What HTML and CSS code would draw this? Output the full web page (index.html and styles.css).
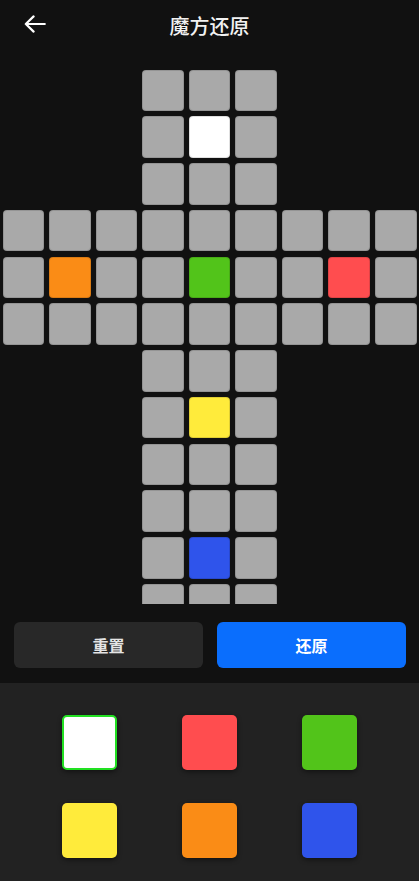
FILE: index.html
```html
<!DOCTYPE html>
<html lang="zh">
<head>
<meta charset="utf-8">
<title>魔方还原</title>
<link rel="stylesheet" href="styles.css">
</head>
<body>
<div class="app">
  <header class="header">
    <div class="back">
      <svg width="22" height="18" viewBox="0 0 22 18"><path d="M20.8 9H1.8M9.6 1.4L1.8 9l7.8 7.6" fill="none" stroke="#fff" stroke-width="2.2" stroke-linecap="round" stroke-linejoin="round"/></svg>
    </div>
    <h1 class="title">魔方还原</h1>
    <div></div>
  </header>

  <div class="cube-scroll">
    <div class="cube">
      <div class="cell s4"></div><div class="cell"></div><div class="cell"></div>
      <div class="cell s4"></div><div class="cell white"></div><div class="cell"></div>
      <div class="cell s4"></div><div class="cell"></div><div class="cell"></div>

      <div class="cell s1"></div><div class="cell"></div><div class="cell"></div><div class="cell"></div><div class="cell"></div><div class="cell"></div><div class="cell"></div><div class="cell"></div><div class="cell"></div>
      <div class="cell s1"></div><div class="cell orange"></div><div class="cell"></div><div class="cell"></div><div class="cell green"></div><div class="cell"></div><div class="cell"></div><div class="cell red"></div><div class="cell"></div>
      <div class="cell s1"></div><div class="cell"></div><div class="cell"></div><div class="cell"></div><div class="cell"></div><div class="cell"></div><div class="cell"></div><div class="cell"></div><div class="cell"></div>

      <div class="cell s4"></div><div class="cell"></div><div class="cell"></div>
      <div class="cell s4"></div><div class="cell yellow"></div><div class="cell"></div>
      <div class="cell s4"></div><div class="cell"></div><div class="cell"></div>

      <div class="cell s4"></div><div class="cell"></div><div class="cell"></div>
      <div class="cell s4"></div><div class="cell blue"></div><div class="cell"></div>
      <div class="cell s4"></div><div class="cell"></div><div class="cell"></div>
    </div>
  </div>

  <div class="actions">
    <button class="btn btn-reset">重置</button>
    <button class="btn btn-solve">还原</button>
  </div>

  <div class="palette">
    <div class="swatch white selected"></div>
    <div class="swatch red"></div>
    <div class="swatch green"></div>
    <div class="swatch yellow"></div>
    <div class="swatch orange"></div>
    <div class="swatch blue"></div>
  </div>
</div>
</body>
</html>
```
FILE: styles.css
```css
* { box-sizing: border-box; }
html, body {
  margin: 0;
  padding: 0;
  background: #111111;
  height: 100%;
  overflow: hidden;
}
body {
  font-family: "Noto Sans CJK SC", "Noto Sans", sans-serif;
  color: #fff;
}
.app {
  width: 419px;
  height: 881px;
  display: flex;
  flex-direction: column;
}
.header {
  height: 52px;
  display: grid;
  grid-template-columns: 1fr auto 1fr;
  align-items: center;
}
.back {
  padding-left: 24px;
  padding-bottom: 4px;
  display: flex;
  align-items: center;
}
.back svg { display: block; }
.title {
  margin: 0;
  font-size: 20px;
  font-weight: 500;
  line-height: 52px;
  color: #f2f2f2;
}
.cube-scroll {
  margin-top: 15px;
  height: 537px;
  overflow: hidden;
}
.cube {
  display: grid;
  grid-template-columns: repeat(9, 1fr);
}
.cell {
  margin: 2.6px 2.5px;
  aspect-ratio: 1 / 1;
  background: #a9a9a9;
  border-radius: 4px;
  border: 1px solid rgba(0, 0, 0, 0.12);
}
.s1 { grid-column-start: 1; }
.s4 { grid-column-start: 4; }
.white { background: #ffffff; }
.orange { background: #fa8c16; }
.green { background: #52c41a; }
.red { background: #ff4d4f; }
.yellow { background: #ffeb3b; }
.blue { background: #2f54eb; }

.actions {
  margin-top: 18px;
  padding: 0 13px 0 14px;
  display: flex;
  gap: 14px;
}
.btn {
  flex: 1;
  height: 46px;
  border: none;
  border-radius: 6px;
  font-family: "Noto Sans CJK SC", "Noto Sans", sans-serif;
  font-size: 16px;
  font-weight: 600;
}
.btn-reset {
  background: #282828;
  color: #e4e4e4;
}
.btn-solve {
  background: #0a6efd;
  color: #ffffff;
}
.palette {
  margin-top: 15px;
  flex: 1;
  background: #222222;
  padding: 32px 30px 0;
  display: grid;
  grid-template-columns: repeat(3, 1fr);
  grid-auto-rows: 54px;
  row-gap: 34px;
  justify-items: center;
  align-content: start;
}
.swatch {
  width: 55px;
  height: 55px;
  border-radius: 5px;
  box-shadow: 0 2px 5px rgba(0, 0, 0, 0.45);
}
.swatch.selected {
  border: 2px solid #22e022;
}
```
